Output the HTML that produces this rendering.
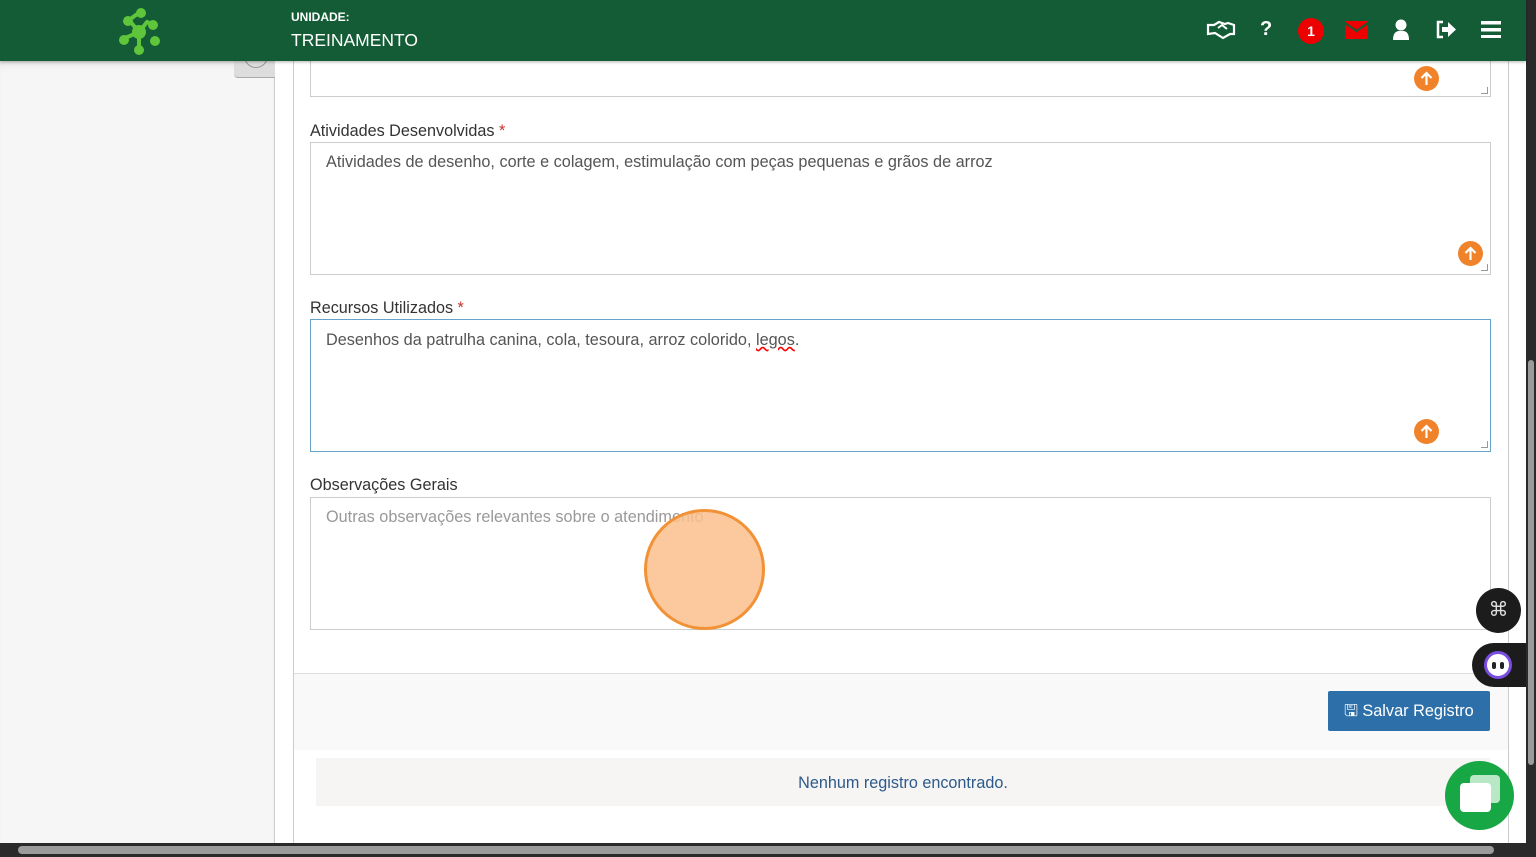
<!DOCTYPE html>
<html><head><meta charset="utf-8"><style>
*{box-sizing:border-box;margin:0;padding:0}
body{width:1536px;height:857px;overflow:hidden;font-family:"Liberation Sans",sans-serif;background:#fff;position:relative;color:#333}
.hdr{position:absolute;left:0;top:0;width:1526px;height:61px;background:#135c35;box-shadow:0 1px 3px rgba(0,0,0,.3);z-index:5}
.side{position:absolute;left:0;top:61px;width:275px;height:782px;background:#f6f6f6;border-right:1px solid #ccc;box-shadow:inset 0 8px 10px -6px rgba(0,0,0,.1)}
.panel{position:absolute;left:293px;top:40px;width:1216px;height:803px;border-left:1px solid #ccc;border-right:1px solid #ccc;background:#fff}
.lbl{position:absolute;left:310px;font-size:16.2px;color:#333}
.lbl b{color:#c9302c;font-weight:normal}
.ta{position:absolute;left:310px;width:1181px;height:133px;border:1px solid #ccc;font-size:16.25px;padding:10px 15px;color:#555}
.up{position:absolute;width:25px;height:25px;border-radius:50%;background:#f0822a}
.up svg{position:absolute;left:6px;top:5px}
.rz{position:absolute;width:7px;height:7px;border-right:1px solid #999;border-bottom:1px solid #999}
.icon{position:absolute;top:20px;color:#fff}
</style></head><body>
<div class="hdr">
 <svg style="position:absolute;left:113px;top:5px" width="52" height="52" viewBox="0 0 52 52"><g stroke="#5fc53a" stroke-width="4" fill="none"><path d="M27 7 L16 15 L26 27 L34 17 L42 20 M26 27 L26 44 M26 27 L12 33"/></g><g fill="#5fc53a"><circle cx="28" cy="8" r="5"/><circle cx="15" cy="16" r="5"/><circle cx="40" cy="20" r="5"/><circle cx="26" cy="27" r="7"/><circle cx="11" cy="35" r="5"/><circle cx="42" cy="36" r="5"/><circle cx="26" cy="45" r="5"/></g></svg>
 <div style="position:absolute;left:291px;top:10px;color:#fff;font-size:12px;font-weight:bold">UNIDADE:</div>
 <div style="position:absolute;left:291px;top:30px;color:#fff;font-size:17.5px">TREINAMENTO</div>
 <svg class="icon" style="left:1206px;top:20px" width="30" height="20" viewBox="0 0 30 20"><path d="M2 5 L8 5 L13 2 L19 4 L22 3 L28 5 L28 14 L24 14 L17 18 L9 13 L2 14 Z" fill="none" stroke="#fff" stroke-width="2.2"/><path d="M12 8 L16 5 L21 9" fill="none" stroke="#fff" stroke-width="2"/></svg>
 <div class="icon" style="left:1260px;top:18px;font-size:20px;font-weight:bold">?</div>
 <div style="position:absolute;left:1298px;top:18px;width:26px;height:26px;border-radius:50%;background:#e00;color:#fff;font-weight:bold;font-size:14px;text-align:center;line-height:26px">1</div>
 <svg style="position:absolute;left:1345px;top:21px" width="23" height="18"><rect width="23" height="18" fill="#e00"/><path d="M0 2 L11.5 10 L23 2" stroke="#135c35" stroke-width="2" fill="none"/></svg>
 <svg style="position:absolute;left:1392px;top:19px" width="18" height="21"><circle cx="9" cy="6" r="5.5" fill="#fff"/><path d="M1 21 Q1 11 9 12 Q17 11 17 21Z" fill="#fff"/></svg>
 <svg style="position:absolute;left:1435px;top:20px" width="22" height="19"><path d="M8 2 H3 V17 H8" stroke="#fff" stroke-width="2.5" fill="none"/><path d="M7 7 H13 V2 L21 9.5 L13 17 V12 H7Z" fill="#fff"/></svg>
 <svg style="position:absolute;left:1481px;top:21px" width="20" height="17"><rect y="0" width="20" height="3.5" fill="#fff"/><rect y="7" width="20" height="3.5" fill="#fff"/><rect y="14" width="20" height="3.5" fill="#fff"/></svg>
</div>
<div class="side"></div>
<div style="position:absolute;left:234px;top:50px;width:41px;height:28px;background:#ddd;border-radius:0 0 0 4px;border-bottom:1px solid #aaa"><div style="position:absolute;left:10px;top:-6px;width:24px;height:24px;border:1.5px solid #999;border-radius:50%"></div></div>
<div class="panel"></div>
<div class="ta" style="top:40px;height:57px;border-top:none"></div>
<div class="up" style="left:1414px;top:66px"><svg width="13" height="15"><path d="M6.5 14 V2 M1.5 7 L6.5 2 L11.5 7" stroke="#fff" stroke-width="2.2" fill="none"/></svg></div>
<div class="rz" style="left:1481px;top:87px"></div>
<div class="lbl" style="top:122px">Atividades Desenvolvidas <b>*</b></div>
<div class="ta" style="top:142px">Atividades de desenho, corte e colagem, estimulação com peças pequenas e grãos de arroz</div>
<div class="up" style="left:1458px;top:241px"><svg width="13" height="15"><path d="M6.5 14 V2 M1.5 7 L6.5 2 L11.5 7" stroke="#fff" stroke-width="2.2" fill="none"/></svg></div>
<div class="rz" style="left:1481px;top:264px"></div>
<div class="lbl" style="top:299px">Recursos Utilizados <b>*</b></div>
<div class="ta" style="top:319px;border-color:#66a3c8;padding-top:11px">Desenhos da patrulha canina, cola, tesoura, arroz colorido, <span style="text-decoration:underline wavy red">legos</span>.</div>
<div class="up" style="left:1414px;top:419px"><svg width="13" height="15"><path d="M6.5 14 V2 M1.5 7 L6.5 2 L11.5 7" stroke="#fff" stroke-width="2.2" fill="none"/></svg></div>
<div class="rz" style="left:1481px;top:441px"></div>
<div class="lbl" style="top:476px">Observações Gerais</div>
<div class="ta" style="top:497px;color:#999;padding-top:10px">Outras observações relevantes sobre o atendimento</div>
<div style="position:absolute;left:644px;top:509px;width:121px;height:121px;border-radius:50%;background:rgba(252,190,140,.85);border:3px solid #f29237"></div>
<div style="position:absolute;left:294px;top:673px;width:1214px;height:77px;background:#f9f9f9;border-top:1px solid #ddd"></div>
<div style="position:absolute;left:1328px;top:691px;width:162px;height:40px;background:#2d6fa8;border-radius:2px;color:#fff;font-size:16.3px;line-height:40px;padding-left:16px">🖫 Salvar Registro</div>
<div style="position:absolute;left:316px;top:758px;width:1174px;height:48px;background:#f6f5f4;color:#2d5a8a;font-size:16.2px;text-align:center;line-height:50px">Nenhum registro encontrado.</div>
<div style="position:absolute;left:1476px;top:588px;width:45px;height:45px;border-radius:50%;background:#1c1c1c;color:#ddd;text-align:center;line-height:45px;font-size:20px">⌘</div>
<div style="position:absolute;left:1472px;top:643px;width:56px;height:44px;border-radius:22px 0 0 22px;background:#1c1c1c"><div style="position:absolute;left:12px;top:8px;width:28px;height:28px;border-radius:50%;background:#fff;border:3px solid #7a4de0"><div style="position:absolute;left:5px;top:8px;width:4px;height:7px;background:#222;border-radius:2px"></div><div style="position:absolute;left:13px;top:8px;width:4px;height:7px;background:#222;border-radius:2px"></div></div></div>
<div style="position:absolute;left:1445px;top:761px;width:69px;height:69px;border-radius:50%;background:#17a744"><div style="position:absolute;left:25px;top:14px;width:30px;height:28px;background:#b8e8c6;border-radius:4px"></div><div style="position:absolute;left:15px;top:22px;width:31px;height:29px;background:#fff;border-radius:4px"></div></div>
<div style="position:absolute;left:1526px;top:0;width:10px;height:857px;background:#2a2a2a"><div style="position:absolute;left:2px;top:360px;width:6px;height:405px;background:#9b9b9b;border-radius:3px"></div></div>
<div style="position:absolute;left:0;top:843px;width:1536px;height:14px;background:#2a2a2a"><div style="position:absolute;left:18px;top:3px;width:1476px;height:8px;background:#9b9b9b;border-radius:4px"></div></div>
</body></html>
